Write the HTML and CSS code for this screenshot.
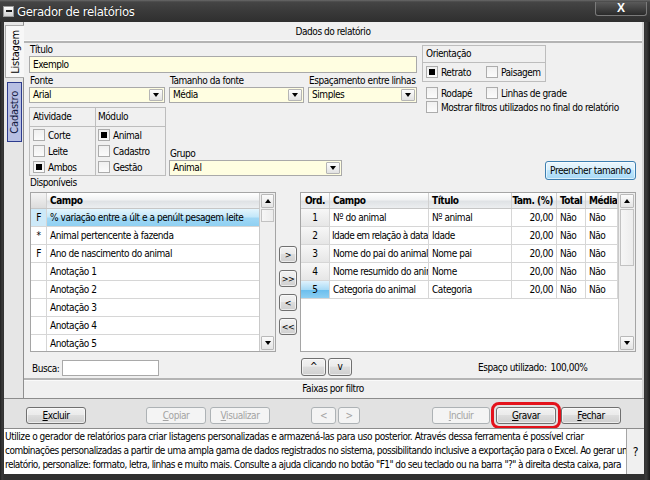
FILE: index.html
```html
<!DOCTYPE html>
<html lang="pt">
<head>
<meta charset="utf-8">
<title>Gerador de relatórios</title>
<link rel="stylesheet" href="styles.css">
</head>
<body>
<div class="window">
  <div class="titlebar">
    <span class="sysicon"></span>
    <span class="title">Gerador de relatórios</span>
    <span class="close">X</span>
  </div>
  <div class="client">
    <div class="tabs">
      <div class="vtab active"><span>Listagem</span></div>
      <div class="vtab hot"><span>Cadastro</span></div>
    </div>
    <div class="panel">
      <div class="band">Dados do relatório</div>
      <div class="form">
        <div class="top">
          <div class="leftcol">
            <div class="lbl">Título</div>
            <div class="input">Exemplo</div>
            <div class="row3">
              <div class="field w-fonte"><div class="lbl l2">Fonte</div><div class="select"><span>Arial</span><i class="drop"></i></div></div>
              <div class="field w-tam"><div class="lbl l2">Tamanho da fonte</div><div class="select"><span>Média</span><i class="drop"></i></div></div>
              <div class="field w-esp"><div class="lbl l2">Espaçamento entre linhas</div><div class="select"><span>Simples</span><i class="drop"></i></div></div>
            </div>
            <div class="row4">
              <div class="groupbox">
                <div class="gcol g1">
                  <div class="ghead">Atividade</div>
                  <div class="gbody">
                    <div class="chk"><span class="box"></span>Corte</div>
                    <div class="chk"><span class="box"></span>Leite</div>
                    <div class="chk"><span class="box on"></span>Ambos</div>
                  </div>
                </div>
                <div class="gcol g2">
                  <div class="ghead">Módulo</div>
                  <div class="gbody">
                    <div class="chk"><span class="box on"></span>Animal</div>
                    <div class="chk"><span class="box"></span>Cadastro</div>
                    <div class="chk"><span class="box"></span>Gestão</div>
                  </div>
                </div>
              </div>
              <div class="field w-grupo"><div class="lbl">Grupo</div><div class="select"><span>Animal</span><i class="drop"></i></div></div>
            </div>
          </div>
          <div class="rightcol">
            <div class="orient">
              <div class="ohead">Orientação</div>
              <div class="obody">
                <div class="chk cw"><span class="box on"></span>Retrato</div>
                <div class="chk"><span class="box"></span>Paisagem</div>
              </div>
            </div>
            <div class="chkrow first">
              <div class="chk cw"><span class="box"></span>Rodapé</div>
              <div class="chk"><span class="box"></span>Linhas de grade</div>
            </div>
            <div class="chkrow">
              <div class="chk"><span class="box"></span>Mostrar filtros utilizados no final do relatório</div>
            </div>
            <button class="btn blue fill">Preencher tamanho</button>
          </div>
        </div>
        <div class="lbl">Disponíveis</div>
        <div class="lists">
          <div class="leftlist">
            <div class="grid">
              <div class="gtable">
                <div class="hr"><div class="c ix"></div><div class="c cf">Campo</div></div>
                <div class="r sel"><div class="c ix">F</div><div class="c cf">% variação entre a últ e a penúlt pesagem leite</div></div>
                <div class="r"><div class="c ix">*</div><div class="c cf">Animal pertencente à fazenda</div></div>
                <div class="r"><div class="c ix">F</div><div class="c cf">Ano de nascimento do animal</div></div>
                <div class="r"><div class="c ix"></div><div class="c cf">Anotação 1</div></div>
                <div class="r"><div class="c ix"></div><div class="c cf">Anotação 2</div></div>
                <div class="r"><div class="c ix"></div><div class="c cf">Anotação 3</div></div>
                <div class="r"><div class="c ix"></div><div class="c cf">Anotação 4</div></div>
                <div class="r"><div class="c ix"></div><div class="c cf">Anotação 5</div></div>
              </div>
              <div class="vscroll">
                <div class="sbtn up"></div>
                <div class="thumb small"></div>
                <div class="track"></div>
                <div class="sbtn down"></div>
              </div>
            </div>
            <div class="busca">
              <span class="blbl">Busca:</span>
              <div class="binput"></div>
            </div>
          </div>
          <div class="midcol">
            <button class="btn mini">&gt;</button>
            <button class="btn mini">&gt;&gt;</button>
            <button class="btn mini">&lt;</button>
            <button class="btn mini">&lt;&lt;</button>
          </div>
          <div class="rightlist">
            <div class="grid">
              <div class="gtable">
                <div class="hr">
                  <div class="c o ctr">Ord.</div><div class="c k1">Campo</div><div class="c k2">Título</div><div class="c k3 rt">Tam. (%)</div><div class="c k4">Total</div><div class="c k5">Média</div>
                </div>
                <div class="r"><div class="c o ord">1</div><div class="c k1">Nº do animal</div><div class="c k2">Nº animal</div><div class="c k3 rt">20,00</div><div class="c k4">Não</div><div class="c k5">Não</div></div>
                <div class="r"><div class="c o ord">2</div><div class="c k1 tight">Idade em relação à data</div><div class="c k2">Idade</div><div class="c k3 rt">20,00</div><div class="c k4">Não</div><div class="c k5">Não</div></div>
                <div class="r"><div class="c o ord">3</div><div class="c k1">Nome do pai do animal</div><div class="c k2">Nome pai</div><div class="c k3 rt">20,00</div><div class="c k4">Não</div><div class="c k5">Não</div></div>
                <div class="r"><div class="c o ord">4</div><div class="c k1">Nome resumido do animal</div><div class="c k2">Nome</div><div class="c k3 rt">20,00</div><div class="c k4">Não</div><div class="c k5">Não</div></div>
                <div class="r"><div class="c o ord cur">5</div><div class="c k1">Categoria do animal</div><div class="c k2">Categoria</div><div class="c k3 rt">20,00</div><div class="c k4">Não</div><div class="c k5">Não</div></div>
              </div>
              <div class="vscroll wide">
                <div class="sbtn up"></div>
                <div class="thumb big"></div>
                <div class="track"></div>
                <div class="sbtn down"></div>
              </div>
            </div>
            <div class="under">
              <button class="btn arrow">^</button>
              <button class="btn arrow v">v</button>
              <span class="esp">Espaço utilizado:</span>
              <span class="pct">100,00%</span>
            </div>
          </div>
        </div>
      </div>
      <div class="band bottom">Faixas por filtro</div>
    </div>
  </div>
  <div class="buttonbar">
    <button class="btn b-excluir"><u>E</u>xcluir</button>
    <button class="btn dis b-copiar"><u>C</u>opiar</button>
    <button class="btn dis b-vis"><u>V</u>isualizar</button>
    <button class="btn dis b-prev">&lt;</button>
    <button class="btn dis b-next">&gt;</button>
    <button class="btn dis b-incluir"><u>I</u>ncluir</button>
    <button class="btn b-gravar"><u>G</u>ravar</button>
    <button class="btn b-fechar"><u>F</u>echar</button>
  </div>
  <div class="help">
    <div class="helptext">Utilize o gerador de relatórios para criar listagens personalizadas e armazená-las para uso posterior. Através dessa ferramenta é possível criar<br><span class="l2">combinações personalizadas a partir de uma ampla gama de dados registrados no sistema, possibilitando inclusive a exportação para o Excel. Ao gerar um</span><br><span class="l3">relatório, personalize: formato, letra, linhas e muito mais. Consulte a ajuda clicando no botão "F1" do seu teclado ou na barra "?" à direita desta caixa, para</span></div>
    <div class="q">?</div>
  </div>
</div>
</body>
</html>
```
FILE: styles.css
```css
* { box-sizing: border-box; }
html, body { margin: 0; padding: 0; }
body {
  width: 650px; height: 480px; overflow: hidden;
  background: #2f2f2f;
  font-family: "DejaVu Sans Condensed", "DejaVu Sans", sans-serif;
  font-stretch: condensed;
  font-size: 10px; letter-spacing: -0.45px; color: #000;
}
button { font-family: inherit; font-size: 10px; letter-spacing: inherit; font-stretch: inherit; color: #000; padding: 0; margin: 0; cursor: default; }

.window {
  width: 650px; height: 480px;
  display: flex; flex-direction: column;
  padding: 0 6px 6px 4px;
  background: linear-gradient(to right, #1e1e1e, #3a3a3a 2px, #303030 4px, #303030 calc(100% - 6px), #3c3c3c calc(100% - 4px), #1a1a1a);
}

/* title bar */
.titlebar {
  height: 22px; flex: none;
  display: flex; align-items: center;
  margin: 0 -6px 0 -4px; padding: 0 6px 0 3px;
  background: linear-gradient(#6a6a6a, #454545 2px, #3a3a3a 50%, #2f2f2f);
  color: #fff;
}
.sysicon {
  width: 11px; height: 11px; flex: none;
  border: 1px solid #9a9a9a;
  background: linear-gradient(#1a1a1a, #1a1a1a) center / 6px 2px no-repeat, linear-gradient(#ffffff, #d0d0d0);
}
.title { font-size: 13px; margin-left: 3px; letter-spacing: -0.35px; text-shadow: 0 0 1px #000; }
.close {
  margin-left: auto; align-self: flex-start; margin-top: 2px; margin-right: -3px;
  width: 52px; height: 14px;
  border: 1px solid #7a7a7a; border-top: none;
  border-radius: 0 0 3px 3px;
  background: linear-gradient(#5a5a5a, #2a2a2a);
  font-weight: bold; font-size: 12px; line-height: 13px; text-align: center; letter-spacing: 0;
  font-family: "Liberation Sans", sans-serif;
}

/* client */
.client { height: 376px; flex: none; display: flex; min-width: 0; }
.tabs { width: 20px; flex: none; background: #e6e6e6; padding-top: 3px; border-right: 1px solid #8f8f8f; }
.vtab { display: flex; align-items: center; justify-content: center; }
.vtab span { writing-mode: vertical-rl; transform: rotate(180deg); font-size: 11px; letter-spacing: -0.2px; }
.vtab.active {
  height: 53px; margin-left: 1px; margin-right: -1px;
  background: #f7f7f7; border: 1px solid #a9a9a9; border-right: none;
  position: relative; z-index: 1;
}
.vtab.hot {
  height: 60px; margin: 4px 1px 0 3px;
  background: #b7bfe3; border: 1px solid #2d3c8e;
  color: #101840;
}

.panel { flex: 1; min-width: 0; overflow: hidden; display: flex; flex-direction: column; background: #f0f0f0; border-right: 2px solid #d6d6d6; }
.band {
  height: 21px; flex: none;
  line-height: 19px; text-align: center;
  background: #f0f0f0;
  border-bottom: 2px solid #b4b4b4;
  box-shadow: inset 0 -1px 0 #fafafa;
}
.band.bottom { border-bottom: none; border-top: 2px solid #b4b4b4; height: 20px; line-height: 18px; box-shadow: inset 0 1px 0 #fafafa; }

.form { flex: 1; padding: 0 6px 0 5px; display: flex; flex-direction: column; min-width: 0; }
.top { display: flex; gap: 5px; }
.leftcol { width: 388px; flex: none; }
.rightcol { flex: 1; min-width: 0; display: flex; flex-direction: column; }

.lbl { height: 13px; line-height: 14px; padding-left: 1px; white-space: nowrap; }
.lbl.l2 { height: 14px; line-height: 15px; }
.input {
  height: 17px; border: 1px solid #a9a9a9; background: #fffee1;
  padding-left: 3px; line-height: 15px;
}
.row3 { display: flex; gap: 4px; }
.w-fonte { width: 136px; }
.w-tam { width: 135px; }
.w-esp { width: 109px; }
.w-grupo { width: 173px; }
.select {
  height: 16px; display: flex; align-items: center;
  border: 1px solid #a9a9a9; background: #fffee1;
}
.select span { flex: 1; padding-left: 3px; line-height: 14px; }
.drop {
  width: 14px; height: 12px; margin-right: 1px; flex: none;
  border: 1px solid #b5b5b5; border-radius: 1px;
  background: linear-gradient(#fdfdfd, #e2e2e2);
  display: flex; align-items: center; justify-content: center;
}
.drop::after {
  content: ""; width: 0; height: 0;
  border-left: 3px solid transparent; border-right: 3px solid transparent;
  border-top: 4px solid #000;
}

.row4 { display: flex; gap: 3px; margin-top: 4px; align-items: flex-end; }
.groupbox { width: 137px; height: 69px; border: 1px solid #bdbdbd; display: flex; }
.gcol.g1 { width: 66px; border-right: 1px solid #bdbdbd; }
.gcol.g2 { flex: 1; }
.ghead { height: 19px; line-height: 18px; border-bottom: 1px solid #bdbdbd; padding-left: 3px; }
.g2 .ghead { padding-left: 2px; }
.gbody { padding: 2px 0 0 3px; }
.g2 .gbody { padding-left: 2px; }
.gbody .chk { height: 12px; margin-bottom: 4px; }

.chk { display: flex; align-items: center; height: 12px; white-space: nowrap; }
.chk .box {
  width: 12px; height: 12px; flex: none; margin-right: 3px;
  border: 1px solid #acacac;
  background: linear-gradient(#f0f0f0, #fbfbfb);
  display: flex; align-items: center; justify-content: center;
}
.chk .box.on::after { content: ""; width: 6px; height: 6px; background: #000; }

.orient { width: 124px; margin-top: 2px; border: 1px solid #bdbdbd; }
.ohead { height: 17px; line-height: 16px; border-bottom: 1px solid #bdbdbd; padding-left: 3px; }
.obody { height: 18px; display: flex; align-items: center; padding-left: 3px; }
.cw { width: 60px; }
.chkrow { display: flex; padding-left: 4px; margin-top: 2px; }
.chkrow.first { margin-top: 5px; }

.btn {
  border: 1px solid #707070; border-radius: 3px;
  background: linear-gradient(#f2f2f2, #ebebeb 45%, #dddddd 50%, #cfcfcf);
  text-align: center; line-height: 15px; height: 17px; white-space: nowrap;
  box-shadow: inset 0 0 0 1px rgba(255,255,255,0.6);
}
.btn u { text-decoration: underline; }
.btn.blue {
  border-color: #3c7fb1;
  background: linear-gradient(#eaf6fd, #d9f0fc 45%, #bee6fd 50%, #a7d9f5);
}
.btn.fill { align-self: flex-end; margin-top: auto; margin-bottom: -4px; width: 91px; height: 19px; line-height: 17px; }
.btn.dis { border-color: #adb2b5; background: #f4f4f4; color: #a3a3a3; box-shadow: none; }

/* lists */
.lists { display: flex; gap: 3px; margin-top: 3px; }
.leftlist { width: 246px; flex: none; margin-left: 1px; }
.midcol { width: 18px; flex: none; padding-top: 54px; display: flex; flex-direction: column; gap: 7px; }
.rightlist { flex: 1; min-width: 0; }
.btn.mini { width: 18px; height: 17px; font-size: 9px; line-height: 14px; letter-spacing: -0.5px; }

.grid { height: 160px; display: flex; border: 1px solid #a5a5a5; background: #fff; overflow: hidden; }
.gtable { flex: 1; min-width: 0; overflow: hidden; }
.hr { display: flex; height: 16px; border-bottom: 1px solid #c6c6c6; background: linear-gradient(#ffffff, #f1f2f3 45%, #dfe2e5 55%, #eceef0); font-weight: bold; }
.r { display: flex; height: 18px; border-bottom: 1px solid #d6d6d6; }
.c { border-right: 1px solid #d6d6d6; padding-left: 3px; white-space: nowrap; overflow: hidden; line-height: 17px; }
.c.tight { letter-spacing: -0.6px; padding-left: 2px; }
.hr .c { line-height: 15px; border-right-color: #d0d0d0; }
.ix { width: 16px; flex: none; text-align: center; padding: 0; }
.hr .ix { background: linear-gradient(#f4f4f4, #dcdcdc); }
.cf { flex: 1; border-right: none; }
.r.sel .ix { background: #cde9f8; }
.r.sel .cf { background: linear-gradient(#e4f5fd, #c4e8fa 45%, #9fd7f5 55%, #8fd0f2); }

.o { width: 29px; flex: none; padding: 0; text-align: center; }
.ord { background: linear-gradient(#f7f7f7, #e6e6e6); }
.ord.cur { background: linear-gradient(#dff2fd, #a9dbf6 50%, #6cbfee 55%, #8dcff2); }
.k1 { width: 99px; flex: none; }
.k2 { width: 83px; flex: none; }
.k3 { width: 45px; flex: none; }
.k4 { width: 29px; flex: none; }
.k5 { flex: 1; min-width: 0; }
.rt { text-align: right; padding-right: 3px; padding-left: 0; }
.ctr { text-align: center; }

.vscroll { width: 16px; flex: none; display: flex; flex-direction: column; background: #efefef; border-left: 1px solid #c9c9c9; }
.vscroll.wide { width: 17px; }
.sbtn {
  height: 14px; margin: 1px; flex: none;
  border: 1px solid #b9b9b9; border-radius: 1px;
  background: linear-gradient(#fbfbfb, #e4e4e4);
  display: flex; align-items: center; justify-content: center;
}
.sbtn.up::after { content: ""; border-left: 3px solid transparent; border-right: 3px solid transparent; border-bottom: 4px solid #000; }
.sbtn.down::after { content: ""; border-left: 3px solid transparent; border-right: 3px solid transparent; border-top: 4px solid #000; }
.thumb { margin: 0 1px; border: 1px solid #c2c2c2; background: linear-gradient(to right, #f6f6f6, #ececec); flex: none; }
.thumb.small { height: 13px; }
.thumb.big { height: 57px; }
.track { flex: 1; }

.busca { display: flex; align-items: center; margin-top: 8px; height: 16px; }
.blbl { padding-left: 2px; width: 32px; flex: none; }
.binput { width: 97px; height: 16px; border: 1px solid #a9a9a9; background: #fff; }

.under { display: flex; align-items: center; margin-top: 6px; height: 18px; padding-left: 1px; }
.btn.arrow { width: 25px; height: 18px; font-size: 10px; line-height: 16px; }
.btn.arrow.v { width: 24px; margin-left: 2px; }
.esp { margin-left: 126px; }
.pct { margin-left: 4px; }

/* bottom bar */
.buttonbar {
  height: 30px; flex: none;
  display: flex; align-items: flex-start;
  padding-top: 8px;
  background: #e2e2e2;
  border-top: 1px solid #8c8c8c;
}
.buttonbar .btn { width: 60px; flex: none; }
.b-excluir { margin-left: 22px; }
.b-copiar { margin-left: 60px; }
.b-vis { margin-left: 4px; }
.buttonbar .b-prev { margin-left: 41px; width: 25px; }
.buttonbar .b-next { margin-left: 2px; width: 22px; }
.buttonbar .b-incluir { margin-left: 72px; width: 58px; }
.b-gravar { margin-left: 6px; outline: 3px solid #e4121b; outline-offset: 2px; }
.b-fechar { margin-left: 5px; }

.help { height: 46px; flex: none; display: flex; background: #fff; border-top: 1px solid #8c8c8c; }
.helptext { flex: 1; min-width: 0; padding: 1px 0 0 1px; line-height: 14px; overflow: hidden; white-space: nowrap; }
.helptext .l2 { letter-spacing: -0.52px; }
.helptext .l3 { letter-spacing: -0.55px; }
.q { width: 18px; flex: none; background: #f0f0f0; border-left: 1px solid #a5a5a5; display: flex; align-items: center; justify-content: center; font-size: 12px; }
```
